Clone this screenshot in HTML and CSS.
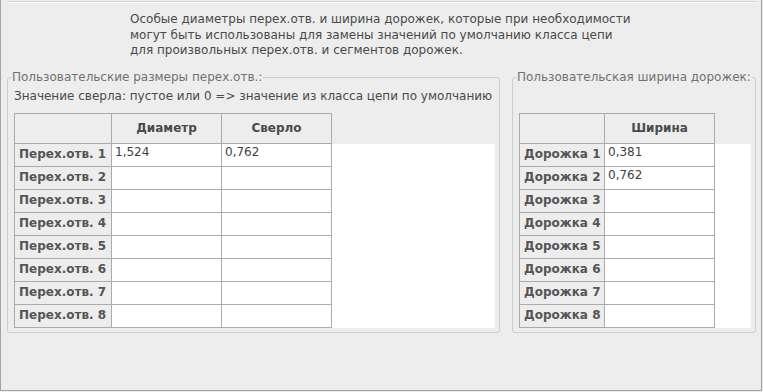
FILE: index.html
```html
<!DOCTYPE html>
<html lang="ru">
<head>
    <meta charset="UTF-8">
    <title>Размеры перех.отв. и ширина дорожек</title>
    <link rel="stylesheet" href="styles.css">
</head>
<body>
    <div class="frame">
        <div class="topline"></div>

        <p class="intro">
            Особые диаметры перех.отв. и ширина дорожек, которые при необходимости<br>
            могут быть использованы для замены значений по умолчанию класса цепи<br>
            для произвольных перех.отв. и сегментов дорожек.
        </p>

        <div class="boxes">
            <fieldset class="box box-vias">
                <legend>Пользовательские размеры перех.отв.:</legend>
                <div class="note">Значение сверла: пустое или 0 =&gt; значение из класса цепи по умолчанию</div>

                <div class="sheet sheet-vias">
                    <div class="cell head first-row first-col"></div>
                    <div class="cell head first-row">Диаметр</div>
                    <div class="cell head first-row">Сверло</div>
                    <div class="pad-head"></div>

                    <div class="cell rowhead first-col">Перех.отв. 1</div>
                    <div class="cell">1,524</div>
                    <div class="cell">0,762</div>
                    <div class="pad"></div>

                    <div class="cell rowhead first-col">Перех.отв. 2</div>
                    <div class="cell"></div>
                    <div class="cell"></div>

                    <div class="cell rowhead first-col">Перех.отв. 3</div>
                    <div class="cell"></div>
                    <div class="cell"></div>

                    <div class="cell rowhead first-col">Перех.отв. 4</div>
                    <div class="cell"></div>
                    <div class="cell"></div>

                    <div class="cell rowhead first-col">Перех.отв. 5</div>
                    <div class="cell"></div>
                    <div class="cell"></div>

                    <div class="cell rowhead first-col">Перех.отв. 6</div>
                    <div class="cell"></div>
                    <div class="cell"></div>

                    <div class="cell rowhead first-col">Перех.отв. 7</div>
                    <div class="cell"></div>
                    <div class="cell"></div>

                    <div class="cell rowhead first-col">Перех.отв. 8</div>
                    <div class="cell"></div>
                    <div class="cell"></div>
                </div>
            </fieldset>

            <fieldset class="box box-tracks">
                <legend>Пользовательская ширина дорожек:</legend>

                <div class="sheet sheet-tracks">
                    <div class="cell head first-row first-col"></div>
                    <div class="cell head first-row">Ширина</div>
                    <div class="pad-head"></div>

                    <div class="cell rowhead first-col">Дорожка 1</div>
                    <div class="cell">0,381</div>
                    <div class="pad"></div>

                    <div class="cell rowhead first-col">Дорожка 2</div>
                    <div class="cell">0,762</div>

                    <div class="cell rowhead first-col">Дорожка 3</div>
                    <div class="cell"></div>

                    <div class="cell rowhead first-col">Дорожка 4</div>
                    <div class="cell"></div>

                    <div class="cell rowhead first-col">Дорожка 5</div>
                    <div class="cell"></div>

                    <div class="cell rowhead first-col">Дорожка 6</div>
                    <div class="cell"></div>

                    <div class="cell rowhead first-col">Дорожка 7</div>
                    <div class="cell"></div>

                    <div class="cell rowhead first-col">Дорожка 8</div>
                    <div class="cell"></div>
                </div>
            </fieldset>
        </div>
    </div>
</body>
</html>
```

FILE: styles.css
```css
:root {
    --background: #ededed;
    --text: #4a4a4a;
    --muted: #727272;
    --frame: #a3a3a3;
    --box-border: #cdcdcd;
    --grid: #ababab;
    --cell: #ffffff;
}

* {
    box-sizing: border-box;
}

body {
    margin: 0;
    background-color: var(--background);
    color: var(--text);
    font-family: 'DejaVu Sans', 'Noto Sans', sans-serif;
    font-size: 12px;
}

.frame {
    width: 762px;
    height: 391px;
    border-left: 1px solid var(--frame);
    border-right: 1px solid var(--frame);
    border-bottom: 1px solid var(--frame);
    overflow: hidden;
}

.topline {
    margin: 1px 5px 0 6px;
    height: 2px;
    border-top: 1px solid #d4d4d4;
    border-bottom: 1px solid #f6f6f6;
}

.intro {
    margin: 9px 0 0 129px;
    line-height: 15.5px;
}

.boxes {
    display: flex;
    align-items: flex-start;
    gap: 12px;
    margin-top: 11px;
    padding-left: 6px;
}

.box {
    margin: 0;
    padding: 0 4px 4px 6px;
    border: 1px solid var(--box-border);
    border-radius: 3px;
    min-width: 0;
}

.box legend {
    margin-left: -3px;
    padding: 0 1px;
    line-height: 15px;
    white-space: nowrap;
    color: var(--muted);
}

.box-vias {
    width: 493px;
}

.box-tracks {
    width: 244px;
}

.box-tracks .sheet {
    margin-top: 28px;
}

.note {
    margin: 4px 0 9px;
    line-height: 15px;
}

/* spreadsheet-like grid: header row, row labels, white viewport */
.sheet {
    display: grid;
    grid-template-rows: 31px repeat(8, 23px);
    background-color: var(--cell);
    height: 215px;
}

.sheet-vias {
    grid-template-columns: 98px 110px 110px 1fr;
}

.sheet-tracks {
    grid-template-columns: 86px 110px 1fr;
}

.cell {
    border-right: 1px solid var(--grid);
    border-bottom: 1px solid var(--grid);
    padding: 1px 3px 0;
    line-height: 15px;
    white-space: nowrap;
    color: #3f3f3f;
}

.first-row {
    border-top: 1px solid var(--grid);
}

.first-col {
    border-left: 1px solid var(--grid);
}

.head {
    background-color: var(--background);
    font-weight: bold;
    text-align: center;
    line-height: 29px;
    padding: 0;
    color: var(--text);
}

.rowhead {
    background-color: var(--background);
    font-weight: bold;
    line-height: 21px;
    padding: 0 0 0 4px;
    color: #555555;
}

.pad-head {
    background-color: var(--background);
}

.pad {
    grid-row: 2 / span 8;
    grid-column: -2;
}
```
